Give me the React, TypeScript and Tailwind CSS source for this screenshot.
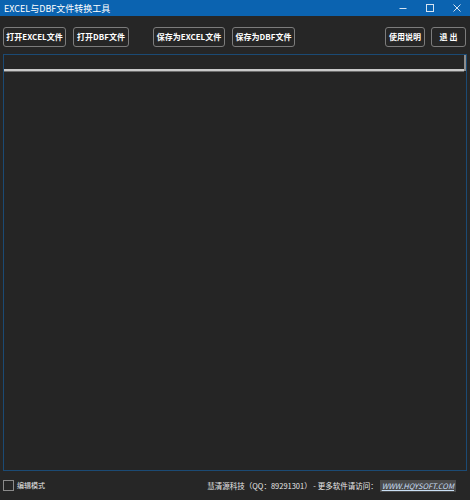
import * as React from "react";

const font = {
  fontFamily: '"Noto Sans CJK SC", "Noto Sans", "Liberation Sans", sans-serif',
};

function ToolButton({
  label,
  className,
}: {
  label: string;
  className?: string;
}) {
  return (
    <button
      type="button"
      className={
        "flex h-5 items-center justify-center rounded-[3px] border border-[#7c7c7c] bg-[#262626] text-[8px] font-bold leading-none text-white " +
        (className ?? "")
      }
    >
      {label}
    </button>
  );
}

export default function App() {
  return (
    <div
      className="flex h-[500px] w-[470px] flex-col bg-[#262626] text-white"
      style={font}
    >
      {/* title bar */}
      <div className="flex h-4 items-center bg-[#0b63b0]">
        <span className="pl-1 text-[9px] leading-none text-white">
          EXCEL与DBF文件转换工具
        </span>
        <div className="ml-auto flex h-full items-center">
          <svg width="8" height="8" viewBox="0 0 8 8" className="mr-[19px]">
            <path d="M0.5 4.5h7" stroke="#d6e4f2" strokeWidth="1" />
          </svg>
          <svg width="8" height="8" viewBox="0 0 8 8" className="mr-[19px]">
            <rect x="0.5" y="0.5" width="7" height="7" fill="none" stroke="#d6e4f2" strokeWidth="1" />
          </svg>
          <svg width="8" height="8" viewBox="0 0 8 8" className="mr-[9px]">
            <path d="M0.5 0.5l7 7M7.5 0.5l-7 7" stroke="#d6e4f2" strokeWidth="1" />
          </svg>
        </div>
      </div>

      {/* toolbar */}
      <div className="flex items-center pt-[11px] pl-[3px] pr-[4px]">
        <ToolButton label="打开EXCEL文件" className="w-[63px]" />
        <ToolButton label="打开DBF文件" className="ml-[7px] w-[56px]" />
        <ToolButton label="保存为EXCEL文件" className="ml-[24px] w-[72px]" />
        <ToolButton label="保存为DBF文件" className="ml-[7px] w-[63px]" />
        <ToolButton label="使用说明" className="ml-auto w-[40px]" />
        <ToolButton label="退 出" className="ml-[6px] w-[35px]" />
      </div>

      {/* grid panel */}
      <div className="mx-[3px] mt-[7px] flex flex-1 flex-col border border-[#1b4a74] bg-[#252525]">
        <div className="flex h-[16px]">
          <div className="flex-1 border-b-2 border-[#c9c9c9] shadow-[0_1px_0_#6c6c6c]" />
          <div className="w-[2px] bg-[#8c8c8c]" />
        </div>
        <div className="flex-1" />
      </div>

      {/* status row */}
      <div className="flex h-[29px] items-start pt-[9px] pl-[3px] pr-[14px]">
        <div className="flex items-center">
          <span className="h-[11px] w-[11px] border border-[#8a8a8a]" />
          <span className="ml-[3px] text-[7px] leading-none text-[#e8e8e8]">
            编辑模式
          </span>
        </div>
        <div className="ml-auto flex items-center text-[7.5px] leading-none text-[#e8e8e8]">
          <span>慧清源科技（QQ：89291301） - 更多软件请访问：</span>
          <span className="ml-[2px] bg-[#4a4a4a] px-[2px] py-[2px] italic text-[#c9dff5] underline">
            WWW.HQYSOFT.COM
          </span>
        </div>
      </div>
    </div>
  );
}
